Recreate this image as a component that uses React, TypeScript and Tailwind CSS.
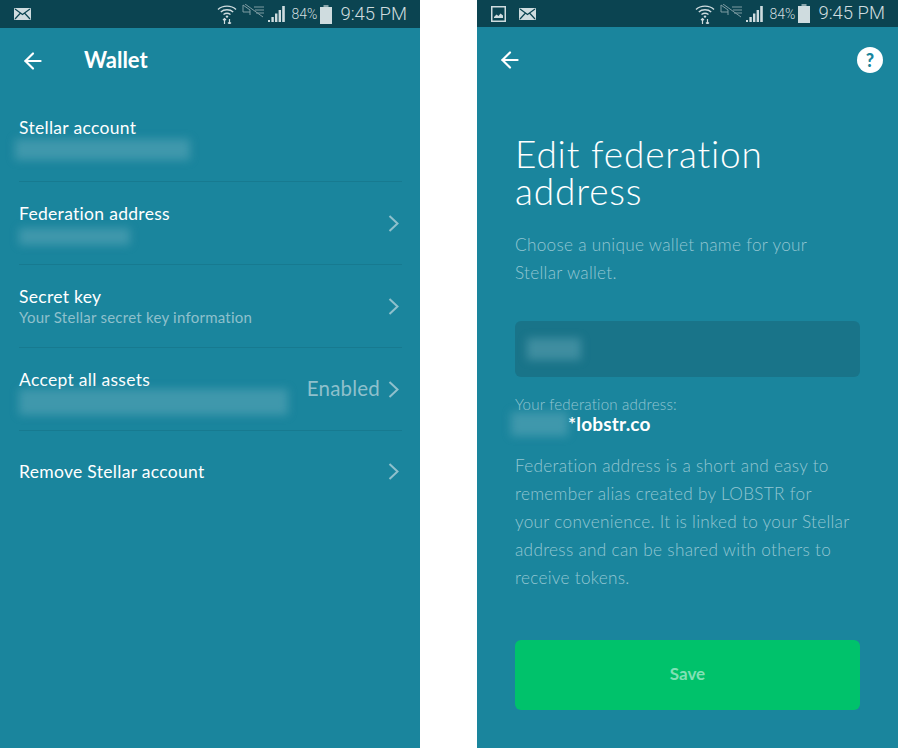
import { ArrowLeft } from 'lucide-react';
import type { ReactNode } from 'react';

const StatusIcons = ({ leftIcons }: { leftIcons: ReactNode }) => (
    <div className="h-full bg-[#0b4451] flex items-center justify-between text-[#cfdcdf]">
        <div className="flex items-center gap-[11px]">{leftIcons}</div>
        <div className="flex items-center">
            {/* Wifi */}
            <svg width="20" height="20" viewBox="0 0 20 20" fill="none" stroke="#cfdcdf" strokeWidth="1.4" className="mr-[5px]">
                <path d="M1 5.5C5.5 1 14.5 1 19 5.5" />
                <path d="M3.8 8C7 5 13 5 16.2 8" />
                <path d="M6.5 10.5C8.5 9 11.5 9 13.5 10.5" />
                <circle cx="10" cy="12.6" r="1.2" fill="#cfdcdf" stroke="none" />
                <path d="M7.5 15v5M6 16l1.5-1.5L9 16M12.5 15v5M11 18.5l1.5 1.5 1.5-1.5" strokeWidth="1.2" />
            </svg>
            {/* Muted signal */}
            <svg width="23" height="14" viewBox="0 0 23 14" fill="none" stroke="#7f9ca3" strokeWidth="1" className="mr-[3px] mb-[6px]">
                <path d="M1 1v7h7M1 1l7 5v5M12 3h10M13 6h9M14 9h8M3 0l18 13" />
            </svg>
            {/* Cell bars */}
            <svg width="19" height="18" viewBox="0 0 19 18" fill="#cfdcdf" className="mr-[5px]">
                <rect x="0" y="15" width="2" height="2" />
                <rect x="3.4" y="12" width="2.4" height="5" />
                <rect x="7" y="8.5" width="2.4" height="8.5" />
                <rect x="10.6" y="5" width="2.4" height="12" />
                <rect x="14.2" y="1" width="2.6" height="16" />
            </svg>
            <span className="text-[14px] leading-none font-['Roboto',sans-serif] font-light">84%</span>
            {/* Battery */}
            <svg width="12" height="19" viewBox="0 0 12 19" fill="#cfdcdf" className="ml-[3px] mr-[8px]">
                <rect x="3.5" y="0" width="5" height="2" fill="#8aa5ab" />
                <rect x="0" y="2" width="12" height="17" />
            </svg>
            <span className="text-[18.5px] leading-none font-['Roboto',sans-serif] mr-[13px] font-light">9:45 PM</span>
        </div>
    </div>
);

const MailIcon = () => (
    <svg width="17" height="12" viewBox="0 0 17 12">
        <rect width="17" height="12" rx="1" fill="#cfdcdf" />
        <path d="M1 1l7.5 5.5L16 1M1 11l5.5-6M16 11l-5.5-6" fill="none" stroke="#0b4451" strokeWidth="1.2" />
    </svg>
);

const PictureIcon = () => (
    <svg width="15" height="16" viewBox="0 0 15 16">
        <rect x="0.75" y="0.75" width="13.5" height="14.5" fill="none" stroke="#cfdcdf" strokeWidth="1.5" />
        <path d="M3 11l2.5-2.5 2 1.5 2-2.5L12 9.5V12H3z" fill="#cfdcdf" />
    </svg>
);

const Chevron = () => (
    <svg width="11" height="17" viewBox="0 0 11 17" fill="none" stroke="#8fc0cc" strokeWidth="2">
        <path d="M1.5 1l8 7.5-8 7.5" />
    </svg>
);

// stands in for the values blurred out in the screenshot
const Smudge = ({ className }: { className: string }) => (
    <div className={`bg-[#79b4c2]/40 blur-[4px] ${className}`}></div>
);

interface RowProps {
    title: string;
    sub?: ReactNode;
    right?: string;
    chevron?: boolean;
    last?: boolean;
}

const Row = ({ title, sub, right, chevron = true, last }: RowProps) => (
    <div className={`h-[83px] flex items-center justify-between ${last ? 'pb-[2px]' : 'border-b border-[#177a90]'}`}>
        <div className="min-w-0">
            <div className="text-[17.5px] leading-[22px] text-white tracking-[0.3px]">{title}</div>
            {sub}
        </div>
        {(right || chevron) && (
            <div className="flex items-center text-[#8fc0cc] pr-[3px]">
                {right && <span className="text-[20.5px] leading-none tracking-[0.2px] mr-[8px] -mt-[2px]">{right}</span>}
                <Chevron />
            </div>
        )}
    </div>
);

export default function App() {
    return (
        <div className="w-[900px] h-[750px] bg-white flex items-start gap-[57px] overflow-hidden font-['Lato',sans-serif]">
            {/* Wallet screen */}
            <div className="w-[420px] h-[748px] bg-[#1a859d]">
                <div className="h-[28px]">
                    <StatusIcons leftIcons={<div className="ml-[14px]"><MailIcon /></div>} />
                </div>
                <div className="h-[66px] flex items-center pl-[20px]">
                    <ArrowLeft size={26} strokeWidth={2} className="text-white" />
                    <span className="ml-[38px] text-[22px] leading-none font-bold text-white -mt-[2px]">Wallet</span>
                </div>
                <div className="pl-[19px] pr-[18px] mt-[5px]">
                    <Row title="Stellar account" chevron={false} sub={<Smudge className="w-[175px] h-[21px] -ml-[4px] mb-[3px]" />} />
                    <Row title="Federation address" sub={<Smudge className="w-[111px] h-[17px] mt-[3px] -mb-[2px]" />} />
                    <Row
                        title="Secret key"
                        sub={<div className="text-[15px] leading-[18px] tracking-[0.25px] text-[#8fc0cc]">Your Stellar secret key information</div>}
                    />
                    <Row title="Accept all assets" right="Enabled" sub={<Smudge className="w-[269px] h-[26px] -mt-[2px] -mb-[6px]" />} />
                    <Row title="Remove Stellar account" last />
                </div>
            </div>

            {/* Edit federation address screen */}
            <div className="w-[421px] h-[748px] bg-[#1a859d]">
                <div className="h-[27px]">
                    <StatusIcons
                        leftIcons={
                            <div className="flex items-center gap-[13px] ml-[14px]">
                                <PictureIcon />
                                <MailIcon />
                            </div>
                        }
                    />
                </div>
                <div className="h-[65px] flex items-center justify-between pl-[20px] pr-[15px]">
                    <ArrowLeft size={26} strokeWidth={2} className="text-white" />
                    <div className="w-[26px] h-[26px] rounded-full bg-white flex items-center justify-center text-[#1a859d] text-[18px] font-black leading-none">?</div>
                </div>
                <div className="px-[38px]">
                    <h1 className="mt-[43px] text-[37px] leading-[37px] font-light text-white tracking-[0.85px]">
                        Edit federation
                        <br />
                        address
                    </h1>
                    <p className="mt-[22px] text-[17.2px] leading-[28px] tracking-[0.3px] text-[#93c6d2] font-light whitespace-nowrap">
                        Choose a unique wallet name for your
                        <br />
                        Stellar wallet.
                    </p>
                    <div className="mt-[34px] h-[56px] w-[345px] rounded-[6px] bg-[#197489] flex items-center pl-[12px]">
                        <Smudge className="w-[54px] h-[22px]" />
                    </div>
                    <div className="mt-[19px] text-[15.1px] leading-[16px] text-[#93c6d2] font-light tracking-[0.2px]">Your federation address:</div>
                    <div className="flex items-center h-[24px] -ml-[4px]">
                        <Smudge className="w-[57px] h-[24px]" />
                        <span className="text-[19px] font-bold text-white tracking-[0.2px]">*lobstr.co</span>
                    </div>
                    <p className="mt-[16px] text-[17.2px] leading-[28px] tracking-[0.3px] text-[#93c6d2] font-light whitespace-nowrap">
                        Federation address is a short and easy to
                        <br />
                        remember alias created by LOBSTR for
                        <br />
                        your convenience. It is linked to your Stellar
                        <br />
                        address and can be shared with others to
                        <br />
                        receive tokens.
                    </p>
                    <button className="mt-[48px] h-[70px] w-[345px] rounded-[6px] bg-[#00c26b] text-[#80e0b5] text-[17px] font-bold pb-[2px]">Save</button>
                </div>
            </div>
        </div>
    );
}
